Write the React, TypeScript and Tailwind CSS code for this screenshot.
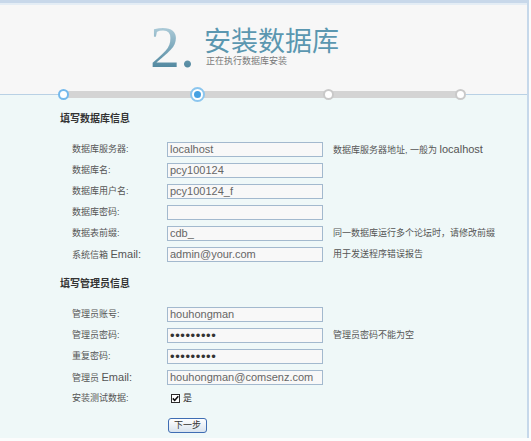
import React from "react";

const F = "font-['Liberation_Sans','Noto_Sans_CJK_SC',sans-serif]";

function Latin({ children }: { children: React.ReactNode }) {
  return <span className="text-[11px]">{children}</span>;
}

function Row({
  label,
  value,
  hint,
  pw,
}: {
  label: React.ReactNode;
  value: string;
  hint?: React.ReactNode;
  pw?: boolean;
}) {
  return (
    <div className="flex h-[21px] items-center">
      <div className="w-[95px] text-[9px] leading-none text-[#555]">{label}</div>
      <input
        readOnly
        type={pw ? "password" : "text"}
        value={value}
        className={
          pw
            ? "h-[15px] w-[156px] border border-[#a3b9ce] bg-[#f8f8f8] px-[2px] text-[13px] tracking-[0.6px] text-[#333] outline-none"
            : "h-[15px] w-[156px] border border-[#a3b9ce] bg-[#f8f8f8] px-[2px] text-[11px] text-[#666] outline-none"
        }
      />
      {hint && <div className="ml-[10px] text-[9px] leading-none text-[#555]">{hint}</div>}
    </div>
  );
}

export default function App() {
  return (
    <div className={`w-[531px] h-[441px] bg-[#fcfcfc] ${F}`}>
      <div className="flex h-[438px] w-[529px] flex-col border-r-2 border-[#c6d8ea]">
        <div className="h-[3px] bg-[#c8d8ea]" />
        <div className="h-[2px] bg-[#e4edf5]" />
        <div className="h-[90px] border-b border-[#b9d1e5] bg-[#f7f7f7] pl-[150px] pt-[12px]">
          <div className="flex items-start">
            <div className="font-['Liberation_Serif',serif] text-[60px] leading-none bg-gradient-to-b from-[#c6dde7] via-[#7eaabd] to-[#3e7992] bg-clip-text text-transparent">
              2.
            </div>
            <div className="ml-[9px] mt-[9px] flex flex-col">
              <div className="font-['Noto_Sans_CJK_SC',sans-serif] text-[27px] leading-none text-[#5b97b0]">
                安装数据库
              </div>
              <div className="ml-[2px] mt-[4px] text-[9px] leading-none text-[#7a7a7a]">
                正在执行数据库安装
              </div>
            </div>
          </div>
        </div>
        <div className="relative h-0">
          <div className="absolute left-[63px] top-[-4px] h-[7px] w-[397px] bg-[#d4d4d4]" />
          <div className="absolute left-[58px] top-[-6px] h-[11px] w-[11px] rounded-full border-2 border-[#74b9ec] bg-white" />
          <div className="absolute left-[190px] top-[-8px] h-[15px] w-[15px] rounded-full border-2 border-[#8cc6ee] bg-white p-[2px]">
            <div className="h-full w-full rounded-full bg-[#46a1e2]" />
          </div>
          <div className="absolute left-[323px] top-[-6px] h-[11px] w-[11px] rounded-full border-2 border-[#c9c9c9] bg-white" />
          <div className="absolute left-[455px] top-[-6px] h-[11px] w-[11px] rounded-full border-2 border-[#c9c9c9] bg-white" />
        </div>
        <div className="flex-1 bg-[#eff8f8] pt-[19px]">
          <div className="pl-[60px] text-[10px] font-bold leading-[10px] text-[#333]">填写数据库信息</div>
          <div className="mt-[15px] pl-[72px]">
            <Row
              label="数据库服务器:"
              value="localhost"
              hint={
                <>
                  数据库服务器地址, 一般为 <Latin>localhost</Latin>
                </>
              }
            />
            <Row label="数据库名:" value="pcy100124" />
            <Row label="数据库用户名:" value="pcy100124_f" />
            <Row label="数据库密码:" value="" />
            <Row label="数据表前缀:" value="cdb_" hint="同一数据库运行多个论坛时，请修改前缀" />
            <Row
              label={
                <>
                  系统信箱 <Latin>Email:</Latin>
                </>
              }
              value="admin@your.com"
              hint="用于发送程序错误报告"
            />
          </div>
          <div className="mt-[14px] pl-[60px] text-[10px] font-bold leading-[10px] text-[#333]">填写管理员信息</div>
          <div className="mt-[15px] pl-[72px]">
            <Row label="管理员账号:" value="houhongman" />
            <Row label="管理员密码:" value="abcdefghi" pw hint="管理员密码不能为空" />
            <Row label="重复密码:" value="abcdefghi" pw />
            <Row
              label={
                <>
                  管理员 <Latin>Email:</Latin>
                </>
              }
              value="houhongman@comsenz.com"
            />
            <div className="flex h-[21px] items-center">
              <div className="w-[95px] text-[9px] leading-none text-[#555]">安装测试数据:</div>
              <span className="ml-[4px] flex h-[9px] w-[9px] items-center justify-center border border-[#2a2a2a] bg-white">
                <svg width="7" height="7" viewBox="0 0 7 7">
                  <path d="M0.8 3.4 L2.7 5.4 L6.3 1.2" fill="none" stroke="#111" strokeWidth="1.6" />
                </svg>
              </span>
              <span className="ml-[3px] text-[9px] leading-none text-[#333]">是</span>
            </div>
            <div className="mt-[9px] pl-[96px]">
              <button className="flex h-[15px] w-[39px] items-center justify-center rounded-[3px] border border-[#3f6db3] bg-gradient-to-b from-[#ffffff] to-[#d9e3ee] text-[9px] leading-none text-[#333]">
                下一步
              </button>
            </div>
          </div>
        </div>
      </div>
    </div>
  );
}
